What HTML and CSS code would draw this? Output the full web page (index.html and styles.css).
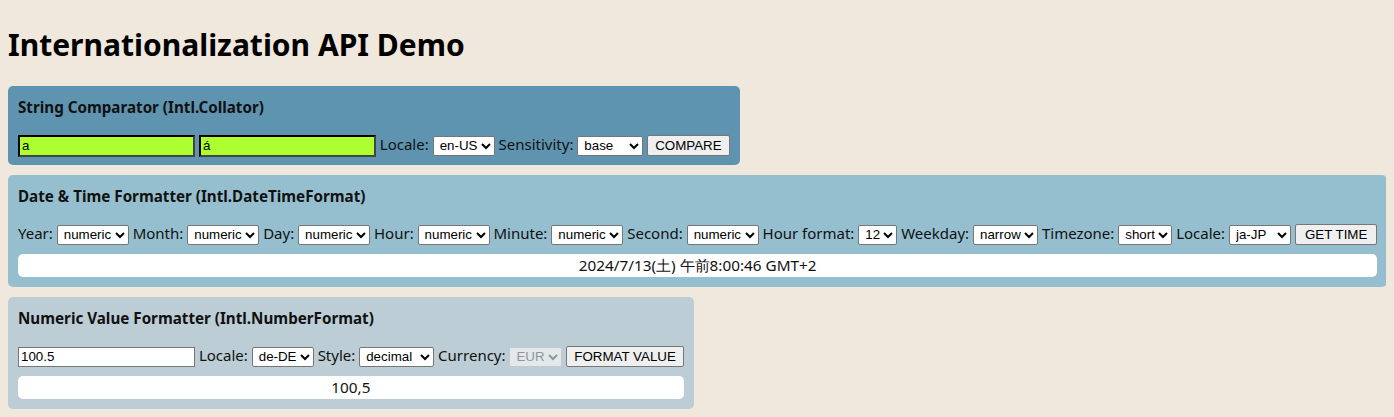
FILE: index.html
```html
<!DOCTYPE html>
<html lang="en">
<head>
<meta charset="utf-8">
<title>Internationalization API Demo</title>
<link rel="stylesheet" href="styles.css">
</head>
<body>
<h1 class="page-title">Internationalization API Demo</h1>

<section class="card card-collator">
  <h3 class="card-title">String Comparator (Intl.Collator)</h3>
  <div class="controls">
    <input class="text-green" type="text" value="a">
    <input class="text-green" type="text" value="á">
    <label>Locale:</label>
    <select><option>en-US</option></select>
    <label>Sensitivity:</label>
    <select class="sel-wide"><option>base</option><option>accent</option></select>
    <button>COMPARE</button>
  </div>
</section>

<section class="card card-date">
  <h3 class="card-title">Date &amp; Time Formatter (Intl.DateTimeFormat)</h3>
  <div class="controls">
    <label>Year:</label> <select><option>numeric</option></select>
    <label>Month:</label> <select><option>numeric</option></select>
    <label>Day:</label> <select><option>numeric</option></select>
    <label>Hour:</label> <select><option>numeric</option></select>
    <label>Minute:</label> <select><option>numeric</option></select>
    <label>Second:</label> <select><option>numeric</option></select>
    <label>Hour format:</label> <select><option>12</option></select>
    <label>Weekday:</label> <select><option>narrow</option></select>
    <label>Timezone:</label> <select><option>short</option></select>
    <label>Locale:</label> <select class="sel-locale"><option>ja-JP</option></select>
    <button class="btn-time">GET TIME</button>
  </div>
  <div class="result">2024/7/13(土) 午前8:00:46 GMT+2</div>
</section>

<section class="card card-number">
  <h3 class="card-title">Numeric Value Formatter (Intl.NumberFormat)</h3>
  <div class="controls">
    <input class="text-plain" type="text" value="100.5">
    <label>Locale:</label> <select><option>de-DE</option></select>
    <label>Style:</label> <select class="sel-style"><option>decimal</option></select>
    <label>Currency:</label> <select disabled><option>EUR</option></select>
    <button>FORMAT VALUE</button>
  </div>
  <div class="result">100,5</div>
</section>
</body>
</html>
```

FILE: styles.css
```css
body {
  margin: 8px;
  background: #f0e8dc;
  font-family: "Noto Sans", "Open Sans", sans-serif;
  font-size: 15px;
  color: #111;
}

.page-title {
  font-size: 30px;
  font-weight: bold;
  margin: 19px 0 23px;
  line-height: 36px;
  color: #000;
}

.card {
  width: fit-content;
  border-radius: 5px;
  padding: 10px;
  margin-bottom: 10px;
  display: flex;
  flex-direction: column;
}

.card-collator { background: #5f94b0; }
.card-date { background: #95bfce; }
.card-number { background: #bccdd5; }

.card-title {
  margin: 0 0 16px;
  font-size: 15.2px;
  font-weight: bold;
  line-height: 22px;
}

.controls {
  line-height: 21px;
  height: 21px;
  white-space: nowrap;
}

.controls select,
.controls button,
.controls input {
  font-family: Arial, "Liberation Sans", sans-serif;
  font-size: 13.33px;
  vertical-align: middle;
}

.controls select {
  height: 20px;
  border: 1px solid #767676;
  border-radius: 2px;
  background: #fff;
  padding-left: 2px;
}

.controls select:disabled {
  border-color: #c8c8c8;
  background: #f4f4f4;
}

.controls button {
  height: 21px;
  padding: 1px 7px;
  border: 1px solid #767676;
  border-radius: 2px;
  background: #efefef;
  color: #000;
}

.controls .btn-time { padding: 1px 9px; }

.text-green {
  width: 169px;
  height: 16px;
  background: #adff2f;
  border: 2px inset #444;
  padding: 1px 2px;
}

.text-plain {
  width: 171px;
  height: 16px;
  background: #fff;
  border: 1px solid #767676;
  padding: 1px 2px;
}

.sel-wide { width: 66px; }
.sel-locale { width: 62px; }
.sel-style { width: 75px; }

.result {
  margin-top: 10px;
  background: #fff;
  border-radius: 5px;
  height: 23px;
  line-height: 23px;
  text-align: center;
  font-size: 15.3px;
}
```
